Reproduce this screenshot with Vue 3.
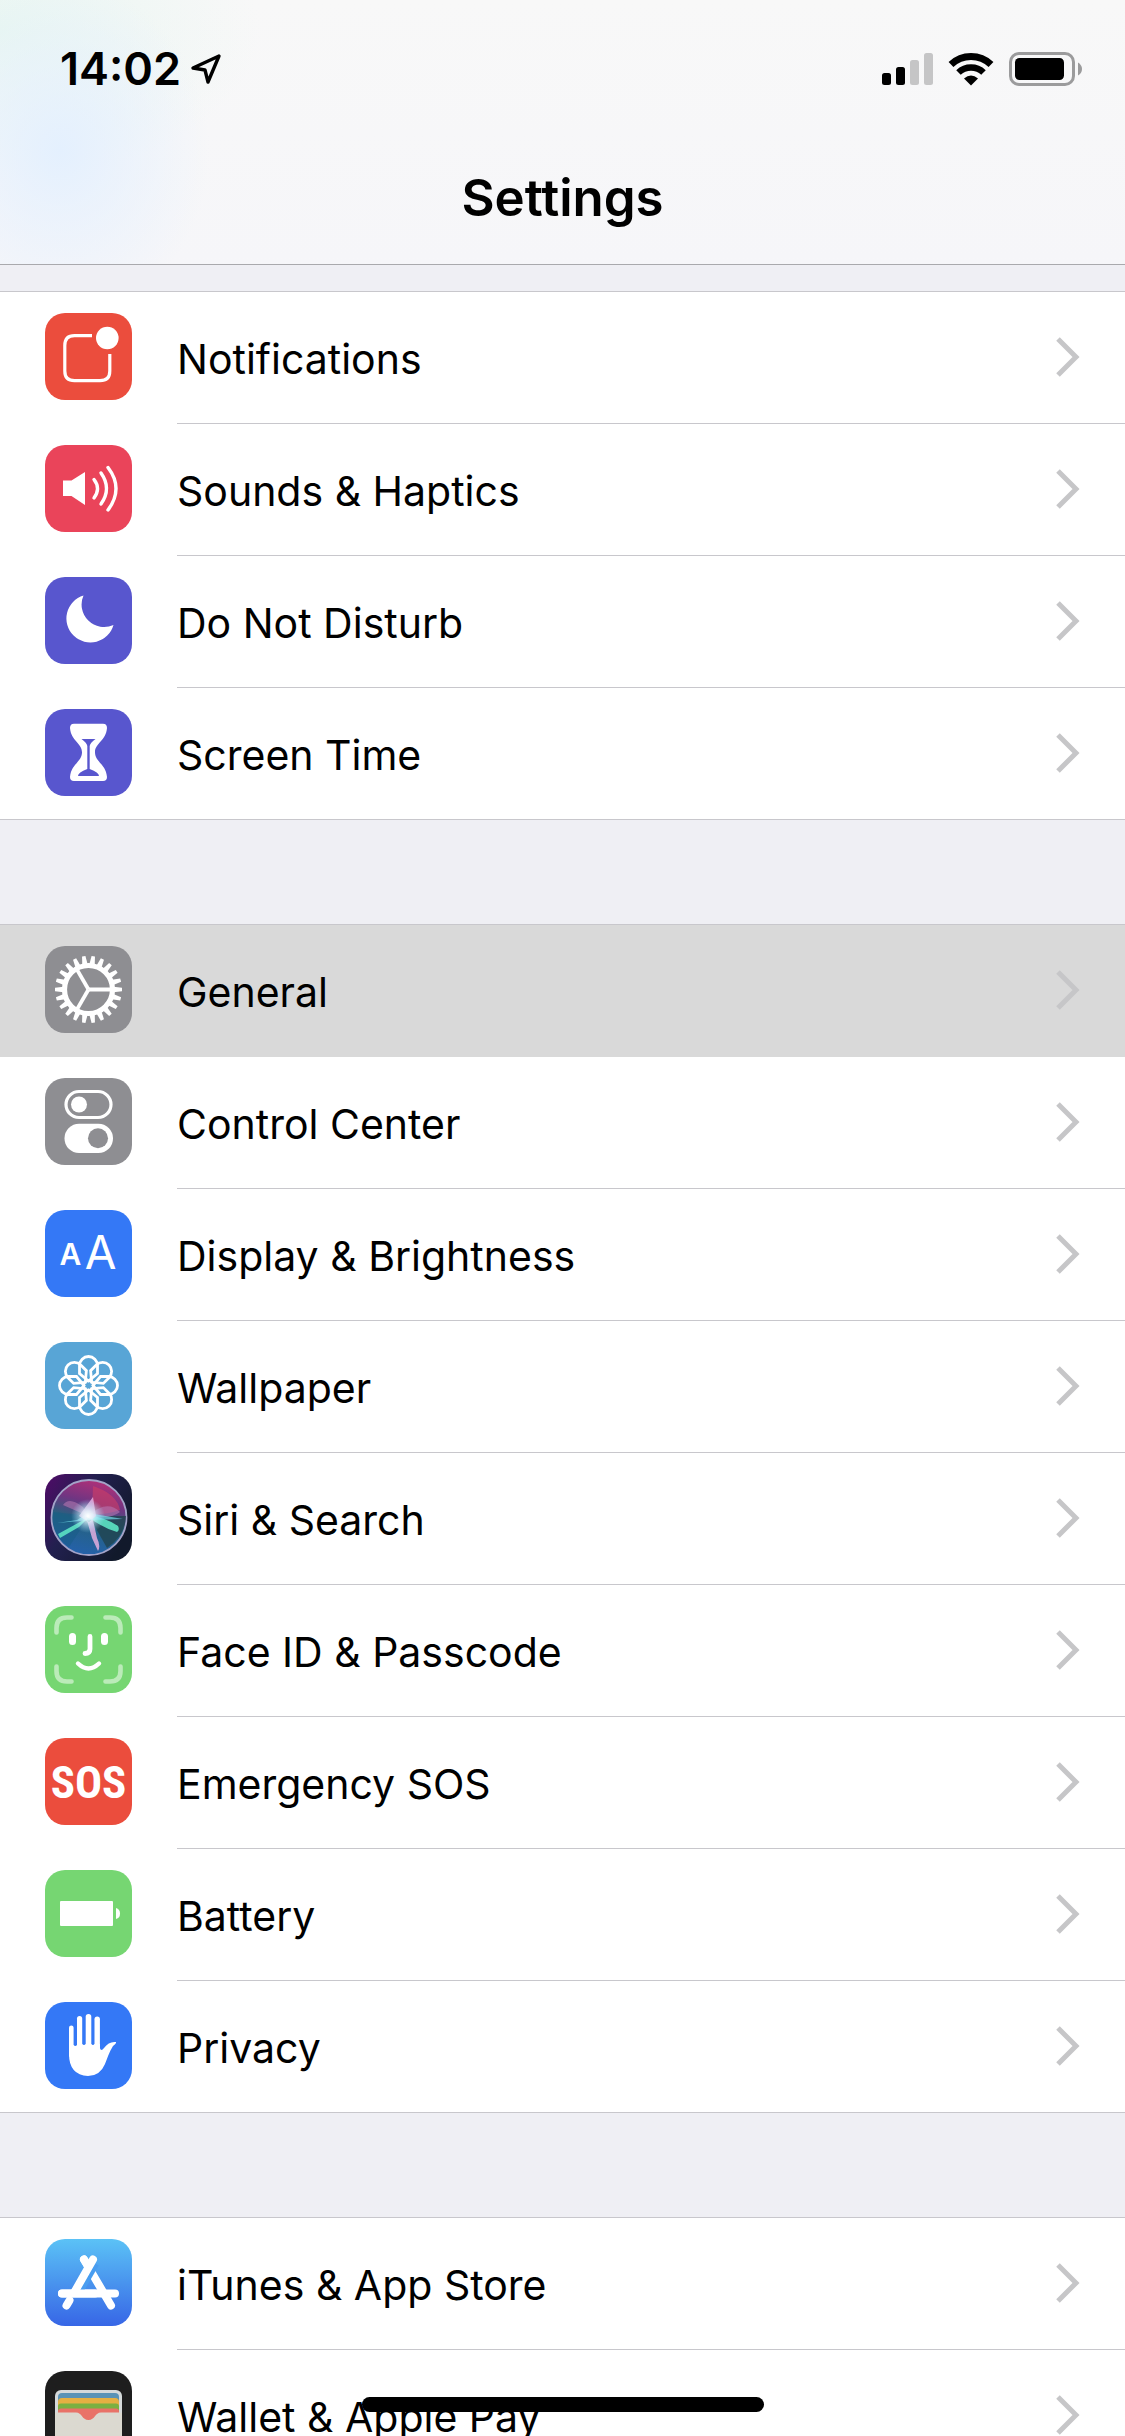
<script setup>
import { ref } from 'vue';

const selected = ref('general');

const groups = [
  [
    { id: 'notifications', label: 'Notifications' },
    { id: 'sounds', label: 'Sounds & Haptics' },
    { id: 'dnd', label: 'Do Not Disturb' },
    { id: 'screentime', label: 'Screen Time' }
  ],
  [
    { id: 'general', label: 'General' },
    { id: 'control', label: 'Control Center' },
    { id: 'display', label: 'Display & Brightness' },
    { id: 'wallpaper', label: 'Wallpaper' },
    { id: 'siri', label: 'Siri & Search' },
    { id: 'faceid', label: 'Face ID & Passcode' },
    { id: 'sos', label: 'Emergency SOS' },
    { id: 'battery', label: 'Battery' },
    { id: 'privacy', label: 'Privacy' }
  ],
  [
    { id: 'appstore', label: 'iTunes & App Store' },
    { id: 'wallet', label: 'Wallet & Apple Pay' }
  ]
];

const gearTeeth = Array.from({ length: 22 }, (_, i) => (i * 360) / 22);
const petals = [0, 45, 90, 135, 180, 225, 270, 315];
</script>

<template>
  <div class="screen">
    <header class="header">
      <div class="status-bar">
        <div class="status-left">
          <span class="time">14:02</span>
          <svg class="location" viewBox="0 0 32 32" aria-hidden="true">
            <path d="M29 3L3 15L15 17L18 29Z" fill="none" stroke="#000" stroke-width="3.4" stroke-linejoin="round" />
          </svg>
        </div>
        <div class="status-right">
          <svg class="signal" viewBox="0 0 51 34" aria-hidden="true">
            <rect x="0" y="21" width="9" height="12" rx="2.5" />
            <rect x="14" y="15" width="9" height="18" rx="2.5" />
            <rect x="28" y="8" width="9" height="25" rx="2.5" fill="#c5c5c6" />
            <rect x="42" y="1" width="9" height="32" rx="2.5" fill="#c5c5c6" />
          </svg>
          <svg class="wifi" viewBox="0 0 46 34" aria-hidden="true">
            <path d="M3 12.5A29 29 0 0 1 43 12.5" fill="none" stroke="#000" stroke-width="7" />
            <path d="M10.5 20.5A18 18 0 0 1 35.5 20.5" fill="none" stroke="#000" stroke-width="6.5" />
            <path d="M16 26.5Q23 20.5 30 26.5L23 33.5Z" />
          </svg>
          <svg class="level" viewBox="0 0 74 34" aria-hidden="true">
            <rect x="1.5" y="1.5" width="63" height="31" rx="8.5" fill="none" stroke="#9b9b9c" stroke-width="3" />
            <rect x="6" y="6" width="49" height="22" rx="4.5" />
            <path d="M69 10.5Q73 13 73 17T69 23.5Z" fill="#9b9b9c" />
          </svg>
        </div>
      </div>
      <h1 class="title">Settings</h1>
    </header>

    <main class="content">
      <ul v-for="(group, i) in groups" :key="i" class="group">
        <li v-for="item in group" :key="item.id">
          <a
              href="#"
              class="row"
              :class="{ active: selected === item.id }"
              @click.prevent="selected = item.id"
          >
            <svg class="icon" :class="item.id" viewBox="0 0 87 87" aria-hidden="true">
              <g v-if="item.id === 'notifications'">
                <path d="M47 22.7H29.5Q19.8 22.7 19.8 32.5V58Q19.8 67.7 29.5 67.7H55Q64.8 67.7 64.8 58V41" fill="none" stroke="#fff" stroke-width="3.2" />
                <circle cx="62.3" cy="25" r="11.3" fill="#fff" />
              </g>

              <g v-else-if="item.id === 'sounds'">
                <path d="M18 35.5H26.5L40 27V60L26.5 51H18Z" fill="#fff" />
                <g fill="none" stroke="#fff" stroke-width="3.4" stroke-linecap="round">
                  <path d="M49 34.5Q56 43.5 49 53" />
                  <path d="M56 28Q67 43.5 56 59" />
                  <path d="M63 22.5Q79 43.5 63 65" />
                </g>
              </g>

              <path v-else-if="item.id === 'dnd'" d="M38.5 18.5A24 24 0 1 0 68.5 48A22.5 22.5 0 0 1 38.5 18.5Z" fill="#fff" />

              <g v-else-if="item.id === 'screentime'">
                <path d="M29 14.7H58Q62 14.7 62 19C61 32 50 34 50 43.3C50 53 61 55 62 68Q62 72 58 72H29Q25 72 25 68C26 55 37 53 37 43.3C37 34 26 32 25 19Q25 14.7 29 14.7Z" fill="#fff" />
                <path d="M36.5 30H50.5Q45 34 44.7 37V60Q54 63.5 54 67H33Q33 63.5 42.3 60V37Q42 34 36.5 30Z" fill="#5856ce" />
              </g>

              <g v-else-if="item.id === 'general'" transform="translate(43.5 43.5)">
                <path v-for="deg in gearTeeth" :key="deg" d="M25 -2.7L33.5 -1.7V1.7L25 2.7Z" fill="#fff" :transform="`rotate(${deg})`" />
                <circle r="24" fill="none" stroke="#fff" stroke-width="5.2" />
                <path v-for="deg in [0, 120, 240]" :key="deg" d="M0 0H23" stroke="#fff" stroke-width="3.8" :transform="`rotate(${deg})`" />
              </g>

              <g v-else-if="item.id === 'control'">
                <rect x="21" y="13.5" width="45" height="26" rx="13" fill="none" stroke="#fff" stroke-width="3.2" />
                <circle cx="34" cy="26.5" r="8" fill="#fff" />
                <rect x="19.5" y="45.7" width="48.5" height="29.3" rx="14.6" fill="#fff" />
                <circle cx="53" cy="60.3" r="10" fill="#8e8e92" />
              </g>

              <g v-else-if="item.id === 'display'" fill="#fff" text-anchor="middle">
                <text x="25.5" y="55" font-size="30" font-weight="600">A</text>
                <text x="55.5" y="59" font-size="46" font-weight="400">A</text>
              </g>

              <g v-else-if="item.id === 'wallpaper'" transform="translate(43.5 43.5)" fill="none" stroke="#fff" stroke-width="2.8">
                <path v-for="deg in petals" :key="deg" d="M0 -4.5L-9 -12V-20A9 9 0 0 1 9 -20V-12Z" :transform="`rotate(${deg})`" />
                <circle r="5" />
              </g>

              <g v-else-if="item.id === 'siri'">
                <defs>
                  <linearGradient id="siri-bg" x1="0" y1="0" x2="1" y2="0.6">
                    <stop offset="0" stop-color="#510a68" />
                    <stop offset="0.45" stop-color="#22204f" />
                    <stop offset="1" stop-color="#11192b" />
                  </linearGradient>
                  <linearGradient id="siri-orb" x1="0.6" y1="0" x2="0.35" y2="1">
                    <stop offset="0" stop-color="#b03078" />
                    <stop offset="0.3" stop-color="#703582" />
                    <stop offset="0.55" stop-color="#25627f" />
                    <stop offset="1" stop-color="#2461ad" />
                  </linearGradient>
                  <radialGradient id="siri-glow">
                    <stop offset="0" stop-color="#fff" />
                    <stop offset="0.3" stop-color="#e6fbff" stop-opacity="0.8" />
                    <stop offset="1" stop-color="#9fdcff" stop-opacity="0" />
                  </radialGradient>
                </defs>
                <rect width="87" height="87" fill="url(#siri-bg)" />
                <circle cx="44" cy="43.5" r="37.5" fill="url(#siri-orb)" stroke="#a3a3c8" stroke-width="1.8" />
                <path d="M44 42L8 38Q5 60 24 73Z" fill="#165b85" opacity="0.5" />
                <path d="M44 42L81 42Q80 62 62 74Z" fill="#21444f" opacity="0.8" />
                <path d="M48 12Q72 20 75 36Q64 40 47 41Z" fill="#ce3e65" opacity="0.6" />
                <path d="M18 31Q24 22 38 33L43 42ZM43 42Q62 25 75 38Q65 46 43 42Z" fill="#b574b0" opacity="0.6" />
                <path d="M44 43L13 60L15 64L34 53ZM43 41Q62 44 73 52Q75 56 72 58Q58 54 43 43Z" fill="#5ce2c3" opacity="0.9" />
                <path d="M12 49L32 46L43 39L78 45L46 46Z" fill="#70dcea" opacity="0.7" />
                <path d="M34 42L48 23L51 42L44 48ZM41 43L47 64L53 77Q56 72 52 64L48 46Z" fill="#eeb3e4" opacity="0.8" />
                <circle cx="43" cy="42" r="17" fill="url(#siri-glow)" />
              </g>

              <g v-else-if="item.id === 'faceid'" fill="none" stroke="#fff" stroke-linecap="round">
                <g stroke-width="4.6" opacity="0.5">
                  <path d="M11.5 26.5V22Q11.5 11.5 22 11.5H26.5" />
                  <path d="M60.5 11.5H65Q75.5 11.5 75.5 22V26.5" />
                  <path d="M75.5 60.5V65Q75.5 75.5 65 75.5H60.5" />
                  <path d="M26.5 75.5H22Q11.5 75.5 11.5 65V60.5" />
                </g>
                <path d="M27.5 30.5V35.5M59.5 30.5V35.5" stroke-width="7" />
                <path d="M45 30.5V43Q45 47.5 40 47.5" stroke-width="4.8" />
                <path d="M33 57.5Q43.5 67.5 54 57.5" stroke-width="4.4" />
              </g>

              <text v-else-if="item.id === 'sos'" class="sos-text" x="43.5" y="59.5" font-size="45" text-anchor="middle" fill="#fff">SOS</text>

              <g v-else-if="item.id === 'battery'" fill="#fff">
                <rect x="15" y="31" width="53" height="25" rx="1" />
                <path d="M71 38Q75 39 75 43.5T71 49Z" />
              </g>

              <g v-else-if="item.id === 'privacy'" fill="#fff">
                <rect x="24" y="23.5" width="4.6" height="32" rx="2.3" />
                <rect x="32" y="14" width="5.2" height="38" rx="2.6" />
                <rect x="40.7" y="12" width="5.6" height="38" rx="2.8" />
                <rect x="49.5" y="14.5" width="5.4" height="38" rx="2.7" />
                <path d="M24 43H28.6Q30.3 45 32 43L37.2 42Q39 44 40.7 42H46.3Q48 44 49.5 42H54.9V46Q56 50 59 46Q64 39 71 40Q71.5 41.5 68 44C64 50 62 57 60 62Q55 74 43 74Q24 73 24 52Z" />
              </g>

              <g v-else-if="item.id === 'appstore'">
                <defs>
                  <linearGradient id="store-bg" x1="0" y1="0" x2="0" y2="1">
                    <stop offset="0" stop-color="#5bc2f6" />
                    <stop offset="1" stop-color="#3766e6" />
                  </linearGradient>
                </defs>
                <rect width="87" height="87" fill="url(#store-bg)" />
                <g fill="none" stroke="#fff" stroke-width="8" stroke-linecap="round">
                  <path d="M17 54.5H70" />
                  <path d="M39 20.5L66 66.5" />
                  <path d="M24.5 61.5L21.5 66.5" />
                </g>
                <path d="M49.5 24L32 54" stroke="#499df0" stroke-width="10" />
                <g fill="none" stroke="#fff" stroke-width="8" stroke-linecap="round">
                  <path d="M48 20.5L29.5 53" />
                  <path d="M17 54.5H50" />
                  <path d="M39 20.5L43 27" />
                </g>
              </g>

              <g v-else-if="item.id === 'wallet'">
                <rect x="10" y="19" width="67" height="60" rx="6" fill="#d5d9da" />
                <rect x="13" y="22" width="61" height="30" rx="4" fill="#5a93b6" />
                <rect x="13" y="27" width="61" height="25" rx="4" fill="#e5b043" />
                <rect x="13" y="32.5" width="61" height="20" rx="3" fill="#7bb041" />
                <rect x="13" y="37.5" width="61" height="20" rx="3" fill="#e97268" />
                <path d="M10 41.5H31C37 41.5 37 49 43.5 49S50 41.5 56 41.5H77V73Q77 79 71 79H16Q10 79 10 73Z" fill="#dbd9d0" />
              </g>
            </svg>

            <span class="cell">
              <span class="label">{{ item.label }}</span>
              <svg class="chevron" viewBox="0 0 24 40" aria-hidden="true">
                <path d="M2 2L20 20L2 38" fill="none" stroke="#c6c6c8" stroke-width="5" />
              </svg>
            </span>
          </a>
        </li>
      </ul>
    </main>

    <div class="home-indicator"></div>
  </div>
</template>

<style>
body { margin: 0; background: #efeff4; }
</style>

<style scoped>
.screen {
  position: relative;
  display: flex;
  flex-direction: column;
  height: 100vh;
  overflow: hidden;
  background: #efeff4;
  color: #000;
  font-family: Inter, "Liberation Sans", sans-serif;
}

.header {
  flex: none;
  border-bottom: 1px solid #a9a9ad;
  background:
    radial-gradient(ellipse 150px 170px at 60px 150px, #e4f0fe 0%, rgba(228, 240, 254, 0) 100%),
    radial-gradient(ellipse 260px 150px at 0 30px, #e8f6f1 0%, rgba(232, 246, 241, 0) 100%),
    linear-gradient(#f8f8f8, #f6f6f9);
}

.status-bar {
  display: flex;
  justify-content: space-between;
  align-items: center;
  height: 138px;
  padding: 0 42px 0 60px;
}
.status-left { display: flex; align-items: center; gap: 9px; }
.time { font-size: 45px; line-height: 52px; font-weight: 600; }
.location { width: 32px; height: 32px; }
.status-right { display: flex; align-items: center; gap: 15px; }
.signal { width: 51px; height: 34px; }
.wifi { width: 46px; height: 34px; }
.level { width: 74px; height: 34px; }

.title {
  margin: 0;
  padding: 30px 0 36px;
  font-size: 51px;
  line-height: 60px;
  font-weight: 600;
  text-align: center;
}

.content {
  flex: 1;
  min-height: 0;
  padding-top: 26px;
  overflow-y: auto;
  scrollbar-width: none;
}

.group {
  margin: 0 0 104px;
  padding: 0;
  list-style: none;
  background: #fff;
  border-top: 1px solid #c8c7cc;
}
.group:last-child { margin-bottom: 0; }

.row {
  display: flex;
  align-items: stretch;
  box-sizing: border-box;
  height: 132px;
  padding-left: 45px;
  color: #000;
  text-decoration: none;
}
.row.active { background: #d9d9d9; }

.cell {
  flex: 1;
  display: flex;
  justify-content: space-between;
  align-items: center;
  margin-left: 45px;
  padding: 0 45px 2px 0;
  border-bottom: 1px solid #c8c7cc;
}
.row.active .cell { border-color: #d9d9d9; }

/* the last separator of a group runs edge to edge */
li:last-child .row { border-bottom: 1px solid #c8c7cc; }
li:last-child .cell { border-bottom: none; }

.label { padding-top: 5px; font-size: 41px; line-height: 52px; }
.chevron { width: 24px; height: 40px; }

.icon {
  flex: none;
  width: 87px;
  height: 87px;
  margin-top: 21px;
  border-radius: 20px;
}
.sos-text {
  font-family: "Roboto Condensed", "Liberation Sans Narrow", Roboto, sans-serif;
  font-weight: 700;
}

.icon.notifications,
.icon.sos { background: #eb4d3d; }
.icon.sounds { background: #ea445a; }
.icon.dnd,
.icon.screentime { background: #5856ce; }
.icon.general,
.icon.control { background: #8e8e92; }
.icon.display,
.icon.privacy { background: #3478f6; }
.icon.wallpaper { background: #58a5d6; }
.icon.faceid,
.icon.battery { background: #76d672; }
.icon.wallet { background: #1e1e1e; }

.home-indicator {
  position: absolute;
  left: 50%;
  bottom: 24px;
  width: 402px;
  height: 15px;
  margin-left: -201px;
  border-radius: 8px;
  background: #000;
}
</style>
